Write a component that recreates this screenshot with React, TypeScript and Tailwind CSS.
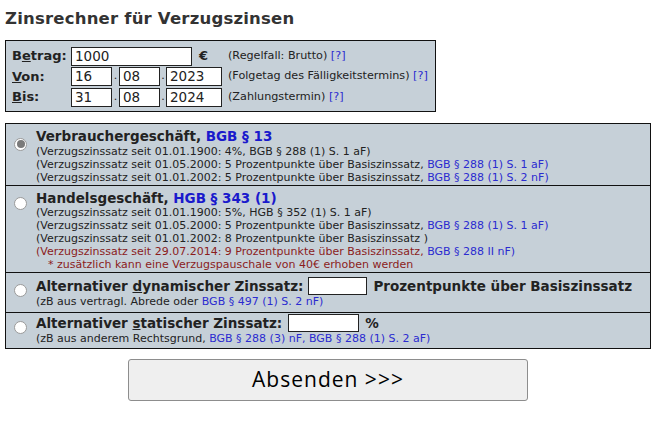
import React from "react";

const F = { fontFamily: '"DejaVu Sans", Verdana, sans-serif' };

function Radio({ checked }: { checked?: boolean }) {
  return (
    <span className="inline-flex h-[13px] w-[13px] shrink-0 items-center justify-center rounded-full border border-[#9a9a9a] bg-white">
      {checked && <span className="h-[8px] w-[8px] rounded-full bg-[#7a7a7a]" />}
    </span>
  );
}

function Lnk({ children }: { children: React.ReactNode }) {
  return <span className="text-[#2b2bd0]">{children}</span>;
}

function Inp({ w, v }: { w: string; v?: string }) {
  return (
    <div className={`${w} h-[19px] shrink-0 border border-[#222] bg-white pl-[3px] text-[13.5px] leading-[17px] text-[#222]`}>
      {v}
    </div>
  );
}

export default function App() {
  return (
    <div className="h-[424px] w-[660px] bg-white text-[#222]" style={F}>
      <div className="px-[5px] pt-[9px]">
        <h1 className="text-[16.5px] font-bold leading-[20px] tracking-[0.2px] text-[#333]">Zinsrechner für Verzugszinsen</h1>

        <div className="mt-[11px] w-[431px] border border-[#111] bg-[#c6d0d8] px-[6px] pb-[4px] pt-[5px]">
          <div className="flex h-[20px] items-center whitespace-nowrap">
            <div className="w-[59px] shrink-0 text-[13px] font-bold">B<span className="underline">e</span>trag:</div>
            <Inp w="w-[121px]" v="1000" />
            <div className="ml-[7px] w-[29px] shrink-0 text-[13px] font-bold">€</div>
            <div className="text-[11.2px]">(Regelfall: Brutto) <Lnk>[?]</Lnk></div>
          </div>
          <div className="flex h-[21px] items-center whitespace-nowrap">
            <div className="w-[59px] shrink-0 text-[13px] font-bold"><span className="underline">V</span>on:</div>
            <Inp w="w-[41px]" v="16" />
            <span className="w-[7px] shrink-0 text-center text-[11px]">.</span>
            <Inp w="w-[41px]" v="08" />
            <span className="w-[6px] shrink-0 text-center text-[11px]">.</span>
            <Inp w="w-[56px]" v="2023" />
            <div className="ml-[6px] text-[11.2px]">(Folgetag des Fälligkeitstermins) <Lnk>[?]</Lnk></div>
          </div>
          <div className="flex h-[20px] items-center whitespace-nowrap">
            <div className="w-[59px] shrink-0 text-[13px] font-bold"><span className="underline">B</span>is:</div>
            <Inp w="w-[41px]" v="31" />
            <span className="w-[7px] shrink-0 text-center text-[11px]">.</span>
            <Inp w="w-[41px]" v="08" />
            <span className="w-[6px] shrink-0 text-center text-[11px]">.</span>
            <Inp w="w-[56px]" v="2024" />
            <div className="ml-[6px] text-[11.2px]">(Zahlungstermin) <Lnk>[?]</Lnk></div>
          </div>
        </div>

        <div className="mt-[11px] w-[646px] border border-[#111] bg-[#c6d0d8]">
          <div className="flex h-[62px] gap-[9px] border-b border-[#111] pl-[8px] pt-[4px]">
            <div className="pt-[3px]"><Radio checked /></div>
            <div>
              <div className="text-[13.5px] font-bold leading-[17px]">Verbrauchergeschäft, <span className="text-[#1a1acc]">BGB § 13</span></div>
              <div className="text-[11px] leading-[13px]">
                <div>(Verzugszinssatz seit 01.01.1900: 4%, BGB § 288 (1) S. 1 aF)</div>
                <div>(Verzugszinssatz seit 01.05.2000: 5 Prozentpunkte über Basiszinssatz, <Lnk>BGB § 288 (1) S. 1 aF)</Lnk></div>
                <div>(Verzugszinssatz seit 01.01.2002: 5 Prozentpunkte über Basiszinssatz, <Lnk>BGB § 288 (1) S. 2 nF)</Lnk></div>
              </div>
            </div>
          </div>
          <div className="flex h-[87px] gap-[9px] border-b border-[#111] pl-[8px] pt-[4px]">
            <div className="pt-[3px]"><Radio /></div>
            <div>
              <div className="text-[13.5px] font-bold leading-[16px]">Handelsgeschäft, <span className="text-[#1a1acc]">HGB § 343 (1)</span></div>
              <div className="text-[11px] leading-[13px]">
                <div>(Verzugszinssatz seit 01.01.1900: 5%, HGB § 352 (1) S. 1 aF)</div>
                <div>(Verzugszinssatz seit 01.05.2000: 5 Prozentpunkte über Basiszinssatz, <Lnk>BGB § 288 (1) S. 1 aF)</Lnk></div>
                <div>(Verzugszinssatz seit 01.01.2002: 8 Prozentpunkte über Basiszinssatz )</div>
                <div className="text-[#8b1c1c]">(Verzugszinssatz seit 29.07.2014: 9 Prozentpunkte über Basiszinssatz, <Lnk>BGB § 288 II nF)</Lnk></div>
                <div className="pl-[12px] text-[#8b1c1c]">* zusätzlich kann eine Verzugspauschale von 40€ erhoben werden</div>
              </div>
            </div>
          </div>
          <div className="flex h-[40px] gap-[9px] border-b border-[#111] pl-[8px] pt-[4px]">
            <div className="pt-[3px]"><Radio /></div>
            <div>
              <div className="flex items-center whitespace-nowrap text-[13.5px] font-bold leading-[17px]">
                <span>Alternativer <span className="underline">d</span>ynamischer Zinssatz:</span>
                <div className="ml-[5px] mr-[6px] h-[18px] w-[59px] border border-[#222] bg-white" />
                <span>Prozentpunkte über Basiszinssatz</span>
              </div>
              <div className="text-[11px] leading-[13px]">(zB aus vertragl. Abrede oder <Lnk>BGB § 497 (1) S. 2 nF)</Lnk></div>
            </div>
          </div>
          <div className="flex h-[35px] gap-[9px] pl-[8px] pt-[1px]">
            <div className="pt-[3px]"><Radio /></div>
            <div>
              <div className="flex items-center whitespace-nowrap text-[13.5px] font-bold leading-[17px]">
                <span>Alternativer <span className="underline">s</span>tatischer Zinssatz:</span>
                <div className="ml-[6px] mr-[6px] h-[18px] w-[71px] border border-[#222] bg-white" />
                <span>%</span>
              </div>
              <div className="text-[11px] leading-[13px]">(zB aus anderem Rechtsgrund, <Lnk>BGB § 288 (3) nF, BGB § 288 (1) S. 2 aF)</Lnk></div>
            </div>
          </div>
        </div>

        <div className="mt-[10px] flex pl-[123px]">
          <button
            className="h-[42px] w-[400px] rounded-[3px] border border-[#8d8d8d] bg-[#efefef] text-[21px] tracking-[1px] text-black"
            style={{ fontFamily: '"Open Sans", "Noto Sans", sans-serif' }}
          >
            Absenden &gt;&gt;&gt;
          </button>
        </div>
      </div>
    </div>
  );
}
